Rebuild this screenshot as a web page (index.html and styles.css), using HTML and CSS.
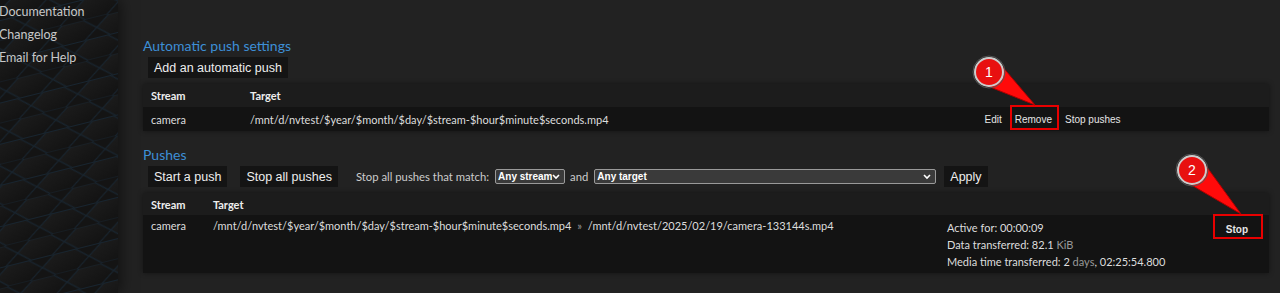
FILE: index.html
```html
<!DOCTYPE html>
<html lang="en">
<head>
  <meta charset="UTF-8" />
  <meta name="viewport" content="width=device-width, initial-scale=1.0" />
  <title>MistServer: Push</title>
  <link rel="stylesheet" href="styles.css">
</head>

<body>
  <div class="page">
    <div class="sidebar">
      <svg class="hexes" width="118" height="293">
        <defs>
          <linearGradient id="cell" x1="0" y1="0" x2="1" y2="1">
            <stop offset="0" stop-color="#1d1d1d" />
            <stop offset="1" stop-color="#111" />
          </linearGradient>
          <pattern id="hex" width="48" height="40" patternUnits="userSpaceOnUse" patternTransform="rotate(-14) skewX(-10)">
            <path d="M0 10 L13 0 L35 0 L48 10 L35 20 L13 20 Z" fill="url(#cell)" stroke="#182530" stroke-width="1" />
            <path d="M-24 30 L-11 20 L11 20 L24 30 L11 40 L-11 40 Z" fill="url(#cell)" stroke="#182530" stroke-width="1" />
            <path d="M24 30 L37 20 L59 20 L72 30 L59 40 L37 40 Z" fill="url(#cell)" stroke="#182530" stroke-width="1" />
          </pattern>
        </defs>
        <rect width="118" height="293" fill="#141414" />
        <rect width="118" height="293" fill="url(#hex)" />
      </svg>
      <ul class="menu">
        <li>Documentation</li>
        <li>Changelog</li>
        <li>Email for Help</li>
      </ul>
    </div>

    <div class="main">
      <h3>Automatic push settings</h3>
      <div class="toolbar">
        <button class="btn">Add an automatic push</button>
      </div>
      <table class="list auto">
        <thead>
          <tr><th class="c-stream">Stream</th><th class="c-target">Target</th><th></th></tr>
        </thead>
        <tbody>
          <tr>
            <td>camera</td>
            <td>/mnt/d/nvtest/$year/$month/$day/$stream-$hour$minute$seconds.mp4</td>
            <td class="actions">
              <div class="btns">
                <button class="act">Edit</button>
                <button class="act">Remove</button>
                <button class="act">Stop pushes</button>
              </div>
            </td>
          </tr>
        </tbody>
      </table>

      <h3>Pushes</h3>
      <div class="toolbar">
        <button class="btn">Start a push</button>
        <button class="btn">Stop all pushes</button>
        <span class="filter">Stop all pushes that match:</span>
        <select class="pick stream"><option>Any stream</option></select>
        <span class="filter">and</span>
        <select class="pick target"><option>Any target</option></select>
        <button class="btn">Apply</button>
      </div>
      <table class="list pushes">
        <thead>
          <tr><th class="c-stream">Stream</th><th class="c-target">Target</th><th class="c-stats"></th><th></th></tr>
        </thead>
        <tbody>
          <tr>
            <td>camera</td>
            <td>/mnt/d/nvtest/$year/$month/$day/$stream-$hour$minute$seconds.mp4 <span class="sep">&raquo;</span> /mnt/d/nvtest/2025/02/19/camera-133144s.mp4</td>
            <td class="stats">
              <div>Active for: 00:00:09</div>
              <div>Data transferred: 82.1 <span class="unit">KiB</span></div>
              <div>Media time transferred: 2 <span class="unit">days</span>, 02:25:54.800</div>
            </td>
            <td class="actions"><button class="act">Stop</button></td>
          </tr>
        </tbody>
      </table>
    </div>

    <!-- screenshot annotations -->
    <svg class="marks" width="1280" height="293">
      <rect x="1011" y="106" width="47" height="23" fill="none" stroke="#e80000" stroke-width="2" />
      <path d="M1001 65 L1035 105 L985 85 Z" fill="#ff0a0a" stroke="#a00" stroke-width="1" />
      <circle cx="989" cy="72" r="14" fill="#e81010" stroke="#ccc" stroke-width="2" />
      <circle cx="989" cy="72" r="16" fill="none" stroke="#555" stroke-width="1" />
      <text x="989" y="77" class="num">1</text>

      <rect x="1214" y="215" width="48" height="23" fill="none" stroke="#e80000" stroke-width="2" />
      <path d="M1204 163 L1241 214 L1188 183 Z" fill="#ff0a0a" stroke="#a00" stroke-width="1" />
      <circle cx="1192" cy="170" r="14" fill="#e81010" stroke="#ccc" stroke-width="2" />
      <circle cx="1192" cy="170" r="16" fill="none" stroke="#555" stroke-width="1" />
      <text x="1192" y="175" class="num">2</text>
    </svg>
  </div>
</body>
</html>
```

FILE: styles.css
```css
body {
  margin: 0;
  background: #222;
  color: #ddd;
  font-family: Lato, 'Open Sans', sans-serif;
  font-size: 11px;
}
.page {
  position: relative;
  display: flex;
  height: 293px;
  overflow: hidden;
}
.sidebar {
  position: relative;
  width: 116px;
  flex: none;
  box-shadow: 4px 0 14px rgba(0, 0, 0, 0.55);
}
.hexes {
  position: absolute;
  top: 0;
  left: 0;
}
.menu {
  position: relative;
  list-style: none;
  margin: 0;
  padding: 2px 0 0 0;
  margin-left: -1px;
  font-size: 12.5px;
  color: #c8c8c8;
}
.menu li {
  height: 23px;
  line-height: 20px;
}
.main {
  flex: 1;
  padding: 37px 11px 0 27px;
}
h3 {
  margin: 0 0 2px 0;
  font-weight: normal;
  font-size: 14px;
  line-height: 18px;
  color: #3d8fd6;
}
.toolbar {
  display: flex;
  align-items: center;
  padding-left: 5px;
  height: 21px;
}
.btn {
  background: #141414;
  color: #eee;
  border: none;
  font-family: 'Liberation Sans', Arial, sans-serif;
  font-size: 12.5px;
  height: 21px;
  padding: 0 6px;
  margin-right: 13px;
  cursor: pointer;
}
.filter {
  color: #ccc;
  font-size: 11.3px;
  margin: 0 6px 0 5px;
}
.pick {
  appearance: none;
  background: #3a3a3a url("data:image/svg+xml;utf8,<svg xmlns='http://www.w3.org/2000/svg' width='8' height='6'><path d='M1 1 L4 4 L7 1' fill='none' stroke='white' stroke-width='1.6'/></svg>") no-repeat right 4px center;
  color: #fff;
  border: 1px solid #9a9a9a;
  border-radius: 2px;
  font-family: 'Liberation Sans', Arial, sans-serif;
  font-weight: bold;
  font-size: 10px;
  height: 15px;
  padding: 0 12px 0 2px;
}
.pick.stream {
  width: 70px;
}
.pick.target {
  width: 342px;
  margin-right: 8px;
}
.list {
  width: 100%;
  border-collapse: collapse;
  margin: 6px 0 15px 0;
  box-shadow: 0 0 5px rgba(0, 0, 0, 0.45);
}
.list th {
  background: #1c1c1c;
  text-align: left;
  font-weight: bold;
  color: #eee;
  height: 23px;
  padding: 0 8px;
}
.list td {
  background: #131313;
  padding: 0 8px;
  vertical-align: top;
  white-space: nowrap;
  color: #ddd;
}
.auto td {
  height: 24px;
  vertical-align: middle;
}
.auto .c-stream {
  width: 83px;
}
.auto .c-target {
  width: 714px;
}
.pushes {
  margin-top: 6px;
}
.pushes td {
  height: 58px;
  padding-top: 4px;
  box-sizing: border-box;
}
.pushes th {
  height: 22px;
}
.pushes .c-stream {
  width: 46px;
}
.pushes .c-target {
  width: 719px;
}
.pushes .c-stats {
  width: 244px;
}
.sep {
  color: #999;
  margin: 0 3px;
}
.stats div {
  line-height: 17px;
}
.unit {
  color: #999;
}
.btns {
  display: flex;
}
.act {
  background: none;
  border: none;
  color: #e6e6e6;
  font-family: 'Liberation Sans', Arial, sans-serif;
  font-size: 10px;
  padding: 0 6.5px;
  height: 22px;
  cursor: pointer;
}
.auto .actions {
  padding-left: 6px;
}
.pushes .actions {
  padding-top: 3px;
  padding-left: 14px;
}
.pushes .act {
  font-weight: bold;
  padding: 0 13px;
}
.marks {
  position: absolute;
  top: 0;
  left: 0;
  pointer-events: none;
}
.num {
  fill: #fff;
  font-family: 'Liberation Sans', Arial, sans-serif;
  font-size: 14px;
  text-anchor: middle;
}
```
